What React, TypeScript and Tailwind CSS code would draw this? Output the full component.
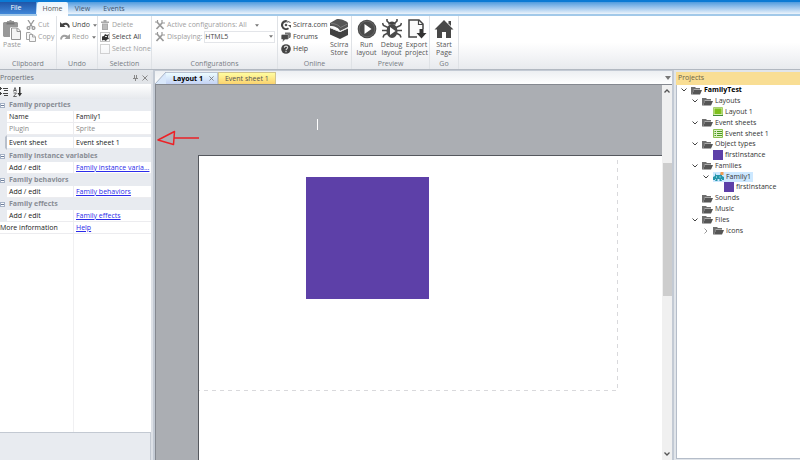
import type { ReactNode } from "react";
import clsx from "clsx";

type IconProps = { className?: string };

const ClipboardIcon = () => (
  <svg viewBox="0 0 18 20" className="h-5 w-[18px] shrink-0">
    <path d="M0 3l1-1h3V1h2l1-1h1l1 1h2v1h3l1 1v4H8L7 8v9H1l-1-1z" fill="#999" />
    <path d="M3.500 2.500h8v2h-8z" fill="#777" />
    <path d="M8.500 8h6l3 3v8.500h-9z" fill="#f4f4f4" stroke="#939393" />
    <path d="M14 8v3.500h3.500" fill="none" stroke="#939393" />
  </svg>
);

const CutIcon = () => (
  <svg viewBox="0 0 10 10" className="h-2.5 w-2.5 shrink-0" fill="none" stroke="#999" strokeWidth="1.300">
    <path d="M2 0l4.500 7M8 0L3.500 7" />
    <circle cx="2.500" cy="8" r="1.400" />
    <circle cx="7.500" cy="8" r="1.400" />
  </svg>
);

const CopyIcon = () => (
  <svg viewBox="0 0 10 10" className="h-2.5 w-2.5 shrink-0" fill="#f8f8f8" stroke="#a5a5a5">
    <path d="M.5 .5h3.500l2 2v5H.5z" />
    <path d="M3.500 2.500h3.500l2.500 2.500v4.500h-6z" />
    <path d="M6.500 2.500v2.500h3" fill="none" />
  </svg>
);

const UndoIcon = ({ className }: IconProps) => (
  <svg viewBox="0 0 10 8" className={clsx("h-2 w-2.5 shrink-0", className)} fill="currentColor">
    <path d="M0 1v5h5.500L3.800 4.300C6 3 7.800 4 8 6.500h1.800C10 2 5.500 .5 2 2.800z" />
  </svg>
);

const TrashIcon = () => (
  <svg viewBox="0 0 8 10" className="mx-px h-2.5 w-2 shrink-0">
    <path d="M0 1.500h2.500V0h3v1.500H8V3H0zM1 3.500h6V10H1z" fill="#a9a9a9" />
    <path d="M3 4.500v4.500M5 4.500v4.500" stroke="#ddd" strokeWidth=".7" />
  </svg>
);

const SelectAllIcon = () => (
  <svg viewBox="0 0 10 10" className="h-2.5 w-2.5 shrink-0">
    <rect x=".5" y=".5" width="9" height="9" fill="none" stroke="#888" strokeDasharray="1 1" />
    <path d="M2 4.500l2-.5 1-2 2 1 2-1-1 3 1 2-2 .5-1 1.500-2-1-2 .5z" fill="#333" />
    <path d="M5 4h2v1H5z" fill="#ddd" />
  </svg>
);

const SelectNoneIcon = () => (
  <svg viewBox="0 0 10 10" className="h-2.5 w-2.5 shrink-0">
    <rect x=".5" y=".5" width="9" height="9" fill="none" stroke="#aaa" strokeDasharray="1 1" />
  </svg>
);

const ToolsIcon = () => (
  <svg viewBox="0 0 10 10" className="h-2.5 w-2.5 shrink-0" fill="none" stroke="#999">
    <path d="M2 2l6.500 7" strokeWidth="1.700" />
    <path d="M1.500 9L7 3" strokeWidth="1.700" />
    <path d="M0 2h2.500V0M7 0v3h3" strokeWidth="1.200" />
  </svg>
);

const ScirraIcon = () => (
  <svg viewBox="0 0 10 10" className="h-2.5 w-2.5 shrink-0">
    <path d="M5 0a5 5 0 1 0 3 9L7 7.500A3 3 0 1 1 6 2.300z" fill="#444" />
    <path d="M5.500 0l1 2.500M7 1.500l2.500 1" stroke="#555" />
    <circle cx="5" cy="5" r="1.300" fill="#555" />
    <path d="M7 5h3v3z" fill="#555" />
  </svg>
);

const ForumsIcon = () => (
  <svg viewBox="0 0 10 10" className="h-2.5 w-2.5 shrink-0">
    <path d="M4 .5h5l.8 .8v3.500L9 6H8L7.500 7 6 5.500H4z" fill="#777" />
    <path d="M1 2.500h5.500l.8 .8v3.500l-.8 .8H4L1.500 10 2 7.500H1l-.8-.8V3.300z" fill="#484848" stroke="#eee" strokeWidth=".4" />
  </svg>
);

const HelpIcon = () => (
  <svg viewBox="0 0 10 10" className="h-2.5 w-2.5 shrink-0">
    <circle cx="5" cy="5" r="4.800" fill="#444" />
    <path
      d="M3.300 3.800C3.400 1.500 6.700 1.600 6.700 3.600 6.700 4.800 5 4.700 5 6.200M5 7v1.200"
      fill="none"
      stroke="#ddd"
      strokeWidth="1.100"
    />
  </svg>
);

const StoreIcon = () => (
  <svg viewBox="0 0 20 20" className="h-5 w-5">
    <path d="M1 4L8 0c4 0 9 1.500 11 4v4l-8 4C10 9 6 7 1 7z" fill="#555" />
    <path d="M2 4.500c4 0 8 1.500 9.500 4L18.500 5" fill="none" stroke="#858585" strokeWidth=".8" />
    <path d="M1 9l10 4 8-4v7l-8 4-10-4.500z" fill="#424242" />
    <path d="M1 8.500l10 4.200L19 9" fill="none" stroke="#e8e8e8" />
  </svg>
);

const RunIcon = () => (
  <svg viewBox="0 0 20 20" className="h-5 w-5">
    <circle cx="10" cy="10" r="9.300" fill="#4a4a4a" />
    <circle cx="10" cy="10" r="7.800" fill="none" stroke="#666" />
    <path d="M7.500 5v10l7-5z" fill="#fff" />
  </svg>
);

const BugIcon = () => (
  <svg viewBox="0 0 20 20" className="h-5 w-5">
    <path
      d="M5 0v2l3 3M15 0v2l-3 3M.5 4l1 2.500L6 8.500M19.500 4l-1 2.500L14 8.500M0 11.500h5M20 11.500h-5M1 18.500L2 16l4-2M19 18.500L18 16l-4-2"
      fill="none"
      stroke="#4a4a4a"
      strokeWidth="1.600"
    />
    <path d="M6 5.500c1-4 7-4 8 0z" fill="#444" />
    <ellipse cx="10" cy="12" rx="5.500" ry="7" fill="#4a4a4a" />
    <path d="M8 8v8l5.500-4z" fill="#fff" />
  </svg>
);

const ExportIcon = () => (
  <svg viewBox="0 0 20 20" className="h-5 w-5">
    <path d="M10 18H2V1h10l4 4v5" fill="#fafafa" stroke="#444" strokeWidth="1.500" />
    <path d="M11.500 1v4.500H16" fill="none" stroke="#444" strokeWidth="1.200" />
    <path d="M12.500 10h4v4h3l-5 5.500-5-5.500h3z" fill="#333" />
  </svg>
);

const HomeIcon = () => (
  <svg viewBox="0 0 20 20" className="h-5 w-5">
    <path d="M10 1l9.500 9.500H17V19h-5v-6H8v6H3v-8.500H.5z" fill="#484848" />
    <path d="M14.500 2H17v5l-2.500-2.500z" fill="#484848" />
  </svg>
);

const Caret = ({ className }: IconProps) => (
  <svg viewBox="0 0 6 4" className={clsx("shrink-0 fill-[#777]", className)}>
    <path d="M0 0h6L3 4z" />
  </svg>
);

const FolderIcon = () => (
  <svg viewBox="0 0 11 9" className="h-[9px] w-[11px] shrink-0">
    <path d="M0 1h4l1 1h4v2H3L1 8.500H0z" fill="#6e6e6e" />
    <path d="M3 4h8L9 8.500H1z" fill="#555" />
    <path d="M2.500 3.500H9" stroke="#c4c4c4" strokeWidth=".7" />
  </svg>
);

const LayoutIcon = () => (
  <svg viewBox="0 0 10 9" className="h-[9px] w-2.5 shrink-0">
    <path d="M.5 .5h9v8h-9z" fill="#d8edb5" stroke="#a9cf70" />
    <path d="M1.500 1.500h7v5.500h-7z" fill="#7ec01c" />
    <path d="M0 8.500h10" stroke="#3f8a35" />
  </svg>
);

const SheetIcon = () => (
  <svg viewBox="0 0 10 9" className="h-[9px] w-2.5 shrink-0">
    <path d="M.5 .5h9v8h-9z" fill="#e0f1cb" stroke="#8cc152" />
    <path d="M1.500 2.500h1.500M4 2.500h5M1.500 4.500h1.500M4 4.500h5M1.500 6.500h1.500M4 6.500h5" stroke="#4c9a20" />
  </svg>
);

const FamilyIcon = () => (
  <svg viewBox="0 0 11 9" className="h-[9px] w-[11px] shrink-0">
    <path d="M2 1l1 2h4l1-2 1 1v2l2 1v3H9V7H8l1 2H6.500V7h-2v2H2l1-2H2v1H0V5l2-1z" fill="#2596ab" />
    <path d="M3 4.500h1v1H3zM6.500 4.500h1v1h-1z" fill="#dff" />
    <path d="M7.500 0h3v3h-3z" fill="#ef9b52" />
  </svg>
);

const SquareIcon = () => <span className="size-2.5 shrink-0 bg-[#5d40a8]" />;

function RibbonGroup({ title, width, children }: { title: string; width: string; children: ReactNode }) {
  return (
    <section
      aria-label={title}
      className={clsx("flex shrink-0 flex-col border-r border-[#dfe2e6] pt-[3px]", width)}
    >
      <div className="flex h-10 items-start">{children}</div>
      <h2 className="text-center leading-[10px] text-[#777c84]">{title}</h2>
    </section>
  );
}

type CommandProps = { icon: ReactNode; label: string; disabled?: boolean; menu?: boolean };

function SmallCommand({ icon, label, disabled, menu }: CommandProps) {
  return (
    <button
      type="button"
      disabled={disabled}
      className={clsx(
        "flex h-3 items-center gap-0.5 whitespace-nowrap",
        disabled ? "text-[#a0a0a0]" : "text-[#444]"
      )}
    >
      {icon}
      {label}
      {menu && <Caret className="ml-px h-[3px] w-1" />}
    </button>
  );
}

function BigCommand({ icon, lines }: { icon: ReactNode; lines: [string, string] }) {
  return (
    <button type="button" className="flex flex-1 flex-col items-center leading-2 text-[#555]">
      {icon}
      <span className="pt-0.5">
        {lines[0]}
        <br />
        {lines[1]}
      </span>
    </button>
  );
}

function Ribbon() {
  return (
    <div className="flex h-[54px] shrink-0 overflow-hidden border-b border-[#b2b8c1] bg-linear-to-b from-white from-50% to-[#e8eaee]">
      <RibbonGroup title="Clipboard" width="w-[57px]">
        <button type="button" disabled className="flex w-6 flex-col items-center pt-px text-[#999]">
          <ClipboardIcon />
          Paste
        </button>
        <div className="pl-0.5">
          <SmallCommand icon={<CutIcon />} label="Cut" disabled />
          <SmallCommand icon={<CopyIcon />} label="Copy" disabled />
        </div>
      </RibbonGroup>
      <RibbonGroup title="Undo" width="w-[41px]">
        <div className="pl-[3px]">
          <SmallCommand icon={<UndoIcon />} label="Undo" menu />
          <SmallCommand icon={<UndoIcon className="-scale-x-100" />} label="Redo" disabled menu />
        </div>
      </RibbonGroup>
      <RibbonGroup title="Selection" width="w-[54px]">
        <div className="pl-0.5">
          <SmallCommand icon={<TrashIcon />} label="Delete" disabled />
          <SmallCommand icon={<SelectAllIcon />} label="Select All" />
          <SmallCommand icon={<SelectNoneIcon />} label="Select None" disabled />
        </div>
      </RibbonGroup>
      <RibbonGroup title="Configurations" width="w-[126px]">
        <div className="flex-1 pl-[3px] pr-0.5 text-[#a0a0a0]">
          <button type="button" className="flex h-3 items-center gap-0.5 whitespace-nowrap">
            <ToolsIcon />
            Active configurations: All
            <Caret className="ml-1.5 h-[3px] w-1" />
          </button>
          <div className="flex h-3 items-center gap-0.5">
            <ToolsIcon />
            <label htmlFor="displaying">Displaying:</label>
            <div className="relative flex-1">
              <select
                id="displaying"
                className="block h-3 w-full appearance-none border border-[#e3e5e9] bg-white text-[#444] outline-none"
              >
                <option>HTML5</option>
              </select>
              <Caret className="pointer-events-none absolute top-1 right-0.5 h-[3px] w-1" />
            </div>
          </div>
        </div>
      </RibbonGroup>
      <RibbonGroup title="Online" width="w-[74px]">
        <div className="pl-[3px]">
          <SmallCommand icon={<ScirraIcon />} label="Scirra.com" />
          <SmallCommand icon={<ForumsIcon />} label="Forums" />
          <SmallCommand icon={<HelpIcon />} label="Help" />
        </div>
        <BigCommand icon={<StoreIcon />} lines={["Scirra", "Store"]} />
      </RibbonGroup>
      <RibbonGroup title="Preview" width="w-[78px]">
        <div className="flex flex-1 pl-0.5">
          <BigCommand icon={<RunIcon />} lines={["Run", "layout"]} />
          <BigCommand icon={<BugIcon />} lines={["Debug", "layout"]} />
          <BigCommand icon={<ExportIcon />} lines={["Export", "project"]} />
        </div>
      </RibbonGroup>
      <RibbonGroup title="Go" width="w-[29px]">
        <BigCommand icon={<HomeIcon />} lines={["Start", "Page"]} />
      </RibbonGroup>
    </div>
  );
}

function PropertyHeader({ title }: { title: string }) {
  return (
    <tr className="h-3 bg-[#e8ebf0]">
      <td>
        <button
          type="button"
          aria-label={`Collapse ${title}`}
          className="flex size-[5px] items-center border border-[#a5b2c6] bg-white"
        >
          <span className="h-px w-full bg-[#6b7c99]" />
        </button>
      </td>
      <th colSpan={2} className="pl-0.5 text-left font-bold text-[#888d95]">
        {title}
      </th>
    </tr>
  );
}

function PropertyRow({ name, children, muted }: { name: string; children: ReactNode; muted?: boolean }) {
  return (
    <tr className={clsx("h-3", muted ? "text-[#8b8b8b]" : "text-[#222]")}>
      <td className="bg-[#e8ebf0]" />
      <td className="border-r border-b border-[#ececef] pl-0.5">{name}</td>
      <td className="border-b border-[#ececef] pl-0.5">{children}</td>
    </tr>
  );
}

const Link = ({ children }: { children: ReactNode }) => (
  <a href="#" className="block text-[#2b2bea] underline">
    {children}
  </a>
);

function PropertiesPanel() {
  return (
    <aside className="flex w-[153px] shrink-0 flex-col overflow-hidden border-r-2 border-[#dde1e7] bg-white">
      <div className="flex h-3 shrink-0 items-center justify-between bg-[#e1e4e8] pr-[3px] text-[#6b6f76]">
        <h2>Properties</h2>
        <div className="flex items-center gap-1">
          <button type="button" aria-label="Pin">
            <svg viewBox="0 0 5 6" className="h-1.5 w-[5px]" fill="none" stroke="#888">
              <path d="M1.500 0v3M3.500 0v3M0 3.500h5M2.500 4v2" />
            </svg>
          </button>
          <button type="button" aria-label="Close properties">
            <svg viewBox="0 0 6 6" className="size-1.5" stroke="#888">
              <path d="M.5 .5l5 5M5.500 .5l-5 5" />
            </svg>
          </button>
        </div>
      </div>
      <div className="flex h-[15px] shrink-0 items-center gap-1 bg-linear-to-b from-white to-[#e6e9ed]">
        <button type="button" aria-label="Group by category">
          <svg viewBox="0 0 9 10" className="h-2.5 w-[9px]" fill="none" stroke="#444">
            <path d="M0 1.500h2M0 6.500h2M3 1.500h5M4 3.500h4M3 6.500h5M4 8.500h4M.5 0v3M.5 5v3" />
          </svg>
        </button>
        <button type="button" aria-label="Sort alphabetically">
          <svg viewBox="0 0 9 10" className="h-2.5 w-[9px]">
            <path d="M.5 4.500L2 .5l1.500 4M1 3.500h2M.5 6h3l-3 3.500h3.200" fill="none" stroke="#444" strokeWidth=".8" />
            <path d="M6 0h1.500v6H9L6.700 9.500 4.500 6H6z" fill="#333" />
          </svg>
        </button>
      </div>
      <table className="w-full table-fixed border-separate border-spacing-0 leading-[10px] whitespace-nowrap">
        <colgroup>
          <col className="w-[7px]" />
          <col className="w-[67px]" />
          <col />
        </colgroup>
        <tbody>
          <PropertyHeader title="Family properties" />
          <PropertyRow name="Name">
            <input
              aria-label="Name"
              defaultValue="Family1"
              className="block h-2.5 w-full bg-transparent outline-none"
            />
          </PropertyRow>
          <PropertyRow name="Plugin" muted>
            Sprite
          </PropertyRow>
          <tr className="h-[15px] text-[#222]">
            <td className="border-y-2 border-r-2 border-[#e8ebf0] border-r-[#b9c0cb] bg-[#e8ebf0]" />
            <td className="border-y-2 border-r border-[#e8ebf0] pl-0.5">Event sheet</td>
            <td className="border-y-2 border-[#e8ebf0] pl-0.5">
              <select aria-label="Event sheet" className="block h-2.5 w-full appearance-none bg-transparent outline-none">
                <option>Event sheet 1</option>
              </select>
            </td>
          </tr>
          <PropertyHeader title="Family instance variables" />
          <PropertyRow name="Add / edit">
            <Link>Family instance varia...</Link>
          </PropertyRow>
          <PropertyHeader title="Family behaviors" />
          <PropertyRow name="Add / edit">
            <Link>Family behaviors</Link>
          </PropertyRow>
          <PropertyHeader title="Family effects" />
          <PropertyRow name="Add / edit">
            <Link>Family effects</Link>
          </PropertyRow>
          <tr className="h-3 text-[#222]">
            <td colSpan={2} className="border-r border-b border-[#ececef]">
              More information
            </td>
            <td className="border-b border-[#ececef] pl-0.5">
              <Link>Help</Link>
            </td>
          </tr>
        </tbody>
      </table>
      <div className="flex flex-1">
        <div className="w-[74px] border-r border-[#f0f0f2]" />
      </div>
      <div className="h-7 shrink-0 border-t border-r border-[#c3c9d2] bg-[#e8ebf0]" />
    </aside>
  );
}

function LayoutCanvas() {
  return (
    <div className="relative flex-1 overflow-hidden border-t border-l border-[#858990] bg-[#abaeb3]">
      {/* layout page with the window bounds dashed on it */}
      <div className="absolute top-[70px] right-0 bottom-0 left-[42px] border-t border-l border-[#55585e] bg-white">
        <svg className="absolute top-0 left-0 h-[236px] w-[420px]" fill="none" stroke="#d9d9dc" strokeDasharray="4 4">
          <path d="M418.500 4v230.500H0" />
        </svg>
        <div className="absolute top-[21px] left-[107px] h-[122px] w-[123px] bg-[#5d40a8]" />
      </div>
      <span className="absolute top-[34px] left-[161px] h-[11px] w-px bg-white" />
      <svg
        viewBox="0 0 43 17"
        className="absolute top-[45px] left-px h-[17px] w-[43px]"
        fill="none"
        stroke="#ec2227"
        strokeWidth="1.500"
      >
        <path d="M42 8H17M17.500 1.500L1 10l15.500 4.500z" strokeLinejoin="round" />
      </svg>
    </div>
  );
}

function Workspace() {
  return (
    <main className="flex min-w-0 flex-1 flex-col border-x-2 border-t border-[#c3cad4]">
      <div role="tablist" className="flex h-[13px] shrink-0 items-end bg-linear-to-b from-[#eceff2] to-white pt-px">
        <svg viewBox="0 0 11 12" className="h-3 w-[11px] shrink-0" preserveAspectRatio="none">
          <path d="M0 12L11 0v12z" fill="#d9e8fb" />
          <path d="M0 12L11 0" stroke="#aab6c6" />
        </svg>
        <button
          type="button"
          role="tab"
          aria-selected="true"
          className="flex h-3 items-center gap-1.5 border-t border-r border-[#b9c3d2] bg-linear-to-b from-[#ecfcff] to-[#c4d3f5] pr-[3px] pl-[7px] font-bold text-black"
        >
          Layout 1
          <svg viewBox="0 0 6 6" className="size-[5px]" stroke="#777">
            <path d="M.5 .5l5 5M5.500 .5l-5 5" />
          </svg>
        </button>
        <button
          type="button"
          role="tab"
          aria-selected="false"
          className="h-3 border border-b-0 border-[#d2c58d] bg-linear-to-b from-[#fffda0] to-[#fbd36e] px-1.5 leading-[10px] text-[#555]"
        >
          Event sheet 1
        </button>
        <button type="button" aria-label="Open documents" className="mr-px ml-auto flex h-3 items-center">
          <Caret className="h-1 w-1.5" />
        </button>
      </div>
      <div className="flex min-h-0 flex-1">
        <LayoutCanvas />
        <div className="flex w-2.5 shrink-0 flex-col items-center justify-between border-t border-[#858990] bg-[#f0f0f0] py-1">
          <svg viewBox="0 0 6 4" className="h-1 w-1.5" fill="none" stroke="#555" strokeWidth="1.300">
            <path d="M.5 3.500L3 1l2.500 2.500" />
          </svg>
          <div className="mt-[70px] mb-auto h-[133px] w-[9px] bg-[#cdcdcd]" />
          <svg viewBox="0 0 6 4" className="h-1 w-1.5" fill="none" stroke="#555" strokeWidth="1.300">
            <path d="M.5 .5L3 3 5.500 .5" />
          </svg>
        </div>
      </div>
    </main>
  );
}

type TreeNode = {
  label: string;
  indent: string;
  icon: ReactNode;
  state?: "open" | "closed";
  bold?: boolean;
  selected?: boolean;
};

const tree: TreeNode[] = [
  { label: "FamilyTest", indent: "pl-1", icon: <FolderIcon />, state: "open", bold: true },
  { label: "Layouts", indent: "pl-[15px]", icon: <FolderIcon />, state: "open" },
  { label: "Layout 1", indent: "pl-[26px]", icon: <LayoutIcon /> },
  { label: "Event sheets", indent: "pl-[15px]", icon: <FolderIcon />, state: "open" },
  { label: "Event sheet 1", indent: "pl-[26px]", icon: <SheetIcon /> },
  { label: "Object types", indent: "pl-[15px]", icon: <FolderIcon />, state: "open" },
  { label: "firstInstance", indent: "pl-[26px]", icon: <SquareIcon /> },
  { label: "Families", indent: "pl-[15px]", icon: <FolderIcon />, state: "open" },
  { label: "Family1", indent: "pl-[26px]", icon: <FamilyIcon />, state: "open", selected: true },
  { label: "firstInstance", indent: "pl-[37px]", icon: <SquareIcon /> },
  { label: "Sounds", indent: "pl-[15px]", icon: <FolderIcon /> },
  { label: "Music", indent: "pl-[15px]", icon: <FolderIcon /> },
  { label: "Files", indent: "pl-[15px]", icon: <FolderIcon />, state: "open" },
  { label: "Icons", indent: "pl-[26px]", icon: <FolderIcon />, state: "closed" },
];

function ProjectsPanel() {
  return (
    <aside className="ml-0.5 flex w-[124px] shrink-0 flex-col pt-0.5 pb-px">
      <h2 className="h-[13px] shrink-0 bg-[#f9de94] pl-0.5 leading-3 text-[#6a6245]">Projects</h2>
      <div className="flex-1 border-b border-l border-[#b5bdc9] bg-white">
        <ul role="tree" className="grid h-[151px] auto-rows-fr text-[#333]">
          {tree.map((node, i) => (
            <li
              key={i}
              role="treeitem"
              aria-selected={!!node.selected}
              className={clsx("flex items-center whitespace-nowrap", node.indent)}
            >
              <span className="w-2.5 shrink-0">
                {node.state && (
                  <svg
                    viewBox="0 0 6 6"
                    className={clsx("size-1.5", node.state === "closed" && "-rotate-90")}
                    fill="none"
                    stroke={node.state === "open" ? "#444" : "#999"}
                  >
                    <path d="M.5 1.500L3 4l2.500-2.500" />
                  </svg>
                )}
              </span>
              <span className={clsx("flex items-center gap-0.5 pr-0.5 leading-[10px]", node.selected && "bg-[#cde8ff]")}>
                {node.icon}
                <span className={clsx(node.bold && "font-bold text-black")}>{node.label}</span>
              </span>
            </li>
          ))}
        </ul>
      </div>
    </aside>
  );
}

export default function App() {
  return (
    <div className="flex h-screen flex-col overflow-hidden bg-[#e1e5ea] font-['Open_Sans',sans-serif] text-[7px] leading-[10px]">
      <header className="h-4 shrink-0 border-b-2 border-[#a2c9e9] bg-linear-to-b from-[#2d8cd8] to-[#edf4fb]">
        <div className="h-0.5 bg-[#0b7ad4]" />
        <nav className="flex h-3">
          <button type="button" className="w-9 bg-linear-to-b from-[#1f56a8] to-[#3f86d8] pr-1 text-white">
            File
          </button>
          <button type="button" className="ml-px h-3.5 w-[31px] rounded-t-xs bg-linear-to-b from-[#e8f3fb] to-white text-[#555]">
            Home
          </button>
          <button type="button" className="w-[29px] pt-px text-[#3d5570]">
            View
          </button>
          <button type="button" className="w-[34px] pt-px text-[#3d5570]">
            Events
          </button>
        </nav>
      </header>
      <Ribbon />
      <div className="flex min-h-0 flex-1">
        <div className="flex pt-0.5">
          <PropertiesPanel />
        </div>
        <Workspace />
        <ProjectsPanel />
      </div>
    </div>
  );
}
